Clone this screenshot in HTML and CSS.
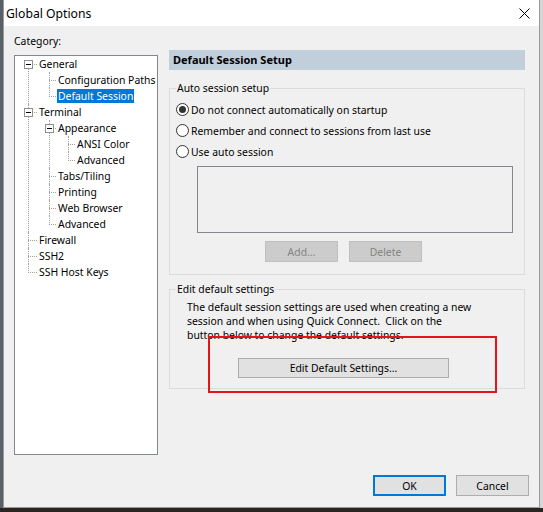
FILE: index.html
```html
<!DOCTYPE html>
<html lang="en">
  <head>
    <title>Global Options</title>
    <meta name="viewport" content="width=device-width, initial-scale=1" />
    <link rel="stylesheet" href="styles.css">
  </head>
  <body>
    <div class="dialog">
      <div class="titlebar">
        <span class="title">Global Options</span>
        <svg class="close" width="11" height="11" viewBox="0 0 11 11">
          <path d="M0.5 0.5L10.5 10.5M10.5 0.5L0.5 10.5" stroke="#000" stroke-width="1" fill="none"/>
        </svg>
      </div>

      <div class="main">
        <div class="categories">
          <div class="label">Category:</div>
          <div class="tree">
            <ul class="root">
              <li><span class="exp"></span><span class="node">General</span>
                <ul>
                  <li><span class="node">Configuration Paths</span></li>
                  <li><span class="node selected">Default Session</span></li>
                </ul>
              </li>
              <li><span class="exp"></span><span class="node">Terminal</span>
                <ul>
                  <li><span class="exp"></span><span class="node">Appearance</span>
                    <ul>
                      <li><span class="node">ANSI Color</span></li>
                      <li><span class="node">Advanced</span></li>
                    </ul>
                  </li>
                  <li><span class="node">Tabs/Tiling</span></li>
                  <li><span class="node">Printing</span></li>
                  <li><span class="node">Web Browser</span></li>
                  <li><span class="node">Advanced</span></li>
                </ul>
              </li>
              <li><span class="node">Firewall</span></li>
              <li><span class="node">SSH2</span></li>
              <li><span class="node">SSH Host Keys</span></li>
            </ul>
          </div>
        </div>

        <div class="panel">
          <div class="header">Default Session Setup</div>

          <fieldset class="auto">
            <legend>Auto session setup</legend>
            <div class="options">
              <div class="option"><span class="radio on"></span>Do not connect automatically on startup</div>
              <div class="option"><span class="radio"></span>Remember and connect to sessions from last use</div>
              <div class="option"><span class="radio"></span>Use auto session</div>
            </div>
            <div class="listbox"></div>
            <div class="buttons">
              <button class="btn" disabled>Add...</button>
              <button class="btn" disabled>Delete</button>
            </div>
          </fieldset>

          <fieldset class="edit">
            <legend>Edit default settings</legend>
            <p>The default session settings are used when creating a new<br>
              session and when using Quick Connect.&nbsp; Click on the<br>
              button below to change the default settings.</p>
            <button class="btn wide">Edit Default Settings...</button>
          </fieldset>

          <div class="mark"></div>
        </div>
      </div>

      <div class="footer">
        <button class="btn ok">OK</button>
        <button class="btn">Cancel</button>
      </div>
    </div>
  </body>
</html>
```

FILE: styles.css
```css
body {
  margin: 0;
  height: 512px;
  overflow: hidden;
  background:
    linear-gradient(to top, #2b2422 4px, transparent 4px),
    linear-gradient(to right, #5a6068 3px, #d6d6d6 3px);
  font-family: "Noto Sans", sans-serif;
  font-size: 10.4px;
  color: #000;
}

.dialog {
  margin-left: 3px;
  width: 537px;
  height: 508px;
  box-sizing: border-box;
  border: 1px solid #9a9a9a;
  border-top: none;
  background: #f0f0f0;
  display: flex;
  flex-direction: column;
}

.titlebar {
  height: 26px;
  flex: none;
  background: #fff;
  display: flex;
  align-items: center;
  justify-content: space-between;
  padding: 0 9px 0 2px;
}

.title {
  font-size: 12.2px;
}

.main {
  flex: 1;
  display: flex;
  gap: 11px;
  padding-left: 10px;
}

.categories {
  width: 144px;
  padding-top: 8px;
}

.label {
  line-height: 14px;
  margin-bottom: 7px;
}

.tree {
  height: 400px;
  box-sizing: border-box;
  border: 1px solid #828790;
  background: #fff;
}

.tree ul {
  list-style: none;
  margin: 0;
  padding: 0;
}

.tree .root {
  margin-left: 13px;
}

.tree ul ul {
  margin-left: 11px;
}

.tree li {
  position: relative;
  padding-left: 8px;
}

.tree .root > li {
  padding-left: 10px;
}

/* dotted connector lines */
.tree li::before {
  content: "";
  position: absolute;
  left: 0;
  top: 8px;
  width: 7px;
  border-top: 1px dotted #a0a0a0;
}

.tree .root > li::before {
  width: 9px;
}

.tree li::after {
  content: "";
  position: absolute;
  left: 0;
  top: 0;
  bottom: 0;
  border-left: 1px dotted #a0a0a0;
}

.tree .root > li:first-child::after {
  top: 8px;
}

.tree li:last-child::after {
  bottom: auto;
  height: 9px;
}

.node {
  display: inline-block;
  height: 14px;
  line-height: 14px;
  margin: 1px 0;
  padding: 0 1px;
  white-space: nowrap;
}

.node.selected {
  background: #0078d7;
  color: #fff;
}

.exp {
  position: absolute;
  left: -4px;
  top: 4px;
  width: 9px;
  height: 9px;
  box-sizing: border-box;
  border: 1px solid #919191;
  background: #fff;
  z-index: 1;
}

.exp::after {
  content: "";
  position: absolute;
  left: 1px;
  top: 3px;
  width: 5px;
  height: 1px;
  background: #000;
}

.panel {
  width: 356px;
  padding-top: 24px;
  position: relative;
}

.header {
  height: 20px;
  line-height: 20px;
  padding-left: 4px;
  background: #c1cedb;
  font-size: 11px;
  font-weight: bold;
}

fieldset {
  margin: 0;
  border: 1px solid #dcdcdc;
  padding: 0 6px;
}

legend {
  padding: 0 1px;
  line-height: 14px;
}

.auto {
  margin-top: 11px;
  padding-bottom: 12px;
}

.options {
  padding-top: 4px;
}

.option {
  display: flex;
  align-items: center;
  gap: 2px;
  height: 21px;
}

.radio {
  width: 13px;
  height: 13px;
  box-sizing: border-box;
  border: 1px solid #333;
  border-radius: 50%;
  background: #fff;
  display: flex;
  align-items: center;
  justify-content: center;
}

.radio.on::after {
  content: "";
  width: 7px;
  height: 7px;
  border-radius: 50%;
  background: #333;
}

.listbox {
  margin: 4px 0 0 21px;
  width: 316px;
  height: 67px;
  box-sizing: border-box;
  border: 1px solid #828790;
}

.buttons {
  display: flex;
  gap: 11px;
  margin: 8px 0 0 89px;
}

.btn {
  width: 73px;
  height: 21px;
  box-sizing: border-box;
  padding: 0;
  border: 1px solid #adadad;
  background: #e1e1e1;
  font: inherit;
  color: #000;
}

.btn:disabled {
  background: #cccccc;
  border-color: #bfbfbf;
  color: #838383;
}

.edit {
  margin-top: 7px;
  padding-bottom: 10px;
}

.edit p {
  margin: 4px 0 0 11px;
  line-height: 14px;
  white-space: nowrap;
}

.btn.wide {
  display: block;
  width: 211px;
  height: 20px;
  margin: 16px 0 0 62px;
}

.mark {
  position: absolute;
  left: 39px;
  top: 310px;
  width: 289px;
  height: 57px;
  box-sizing: border-box;
  border: 2px solid #e5141b;
}

.footer {
  flex: none;
  display: flex;
  justify-content: flex-end;
  gap: 10px;
  padding: 0 10px 11px 0;
}

.btn.ok {
  border: 2px solid #0078d7;
}
```
